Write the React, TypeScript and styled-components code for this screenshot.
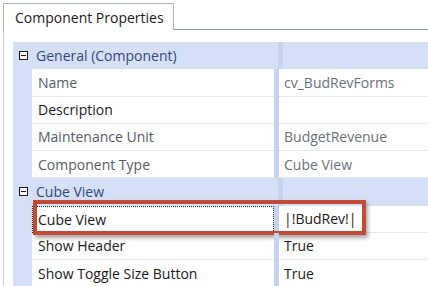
import React from "react";
import styled, { createGlobalStyle, css } from "styled-components";

const GlobalStyle = createGlobalStyle`
    html, body {
        margin: 0;
        padding: 0;
        background: #ffffff;
        overflow: hidden;
    }
`;

const Page = styled.div`
    width: 428px;
    height: 286px;
    font-family: "Open Sans", "Noto Sans", sans-serif;
    font-size: 14px;
    color: #1e1e1e;
    padding-top: 3px;
    box-sizing: border-box;
    overflow: hidden;
`;

const TabStrip = styled.div`
    display: flex;
    align-items: flex-end;
    height: 27px;
    padding-left: 3px;
`;

const Tab = styled.div`
    width: 171px;
    height: 27px;
    box-sizing: border-box;
    border: 1px solid #aab3c6;
    border-bottom: none;
    padding-left: 11px;
    display: flex;
    align-items: center;
    color: #1a1a1a;
`;

const TabLine = styled.div`
    flex: 1;
    border-bottom: 1px solid #8e9ab2;
`;

const Panel = styled.div`
    margin-left: 3px;
    border-left: 1px solid #c8d0de;
    padding: 12px 0 0 9px;
    height: 260px;
`;

const Grid = styled.div`
    display: flex;
    flex-direction: column;
`;

const Row = styled.div<{ category?: boolean }>`
    position: relative;
    display: flex;
    height: 27.25px;
    ${({ category }) =>
        category &&
        css`
            background: #d5e0f6;
        `}
`;

const Gutter = styled.div`
    width: 19px;
    flex: none;
    background: #d5e0f6;
    display: flex;
    align-items: center;
    justify-content: center;
`;

const Toggle = styled.span`
    width: 7px;
    height: 7px;
    border: 1px solid #1a1a1a;
    background: #ffffff;
    position: relative;
    margin-left: 2px;

    &::after {
        content: "";
        position: absolute;
        left: 1px;
        right: 1px;
        top: 3px;
        height: 1px;
        background: #1a1a1a;
    }
`;

const CategoryLabel = styled.div`
    width: 242px;
    flex: none;
    padding-left: 4px;
    display: flex;
    align-items: center;
    color: #34477a;
`;

const NameCell = styled.div<{ muted?: boolean; focused?: boolean }>`
    width: 242px;
    flex: none;
    box-sizing: border-box;
    padding-left: 6px;
    display: flex;
    align-items: center;
    border-bottom: 1px solid #e2e8f5;
    white-space: nowrap;
    color: ${({ muted }) => (muted ? "#555b66" : "#1a1a1a")};
    ${({ focused }) =>
        focused &&
        css`
            border: 1px dotted #222;
            padding-left: 5px;
        `}
`;

const Splitter = styled.div`
    width: 5px;
    flex: none;
    background: #c6d3ee;
`;

const ValueCell = styled.div<{ muted?: boolean }>`
    flex: 1;
    box-sizing: border-box;
    padding-left: 5px;
    display: flex;
    align-items: center;
    border-bottom: 1px solid #e2e8f5;
    white-space: nowrap;
    color: ${({ muted }) => (muted ? "#6b717c" : "#1a1a1a")};
`;

const Highlight = styled.div`
    position: absolute;
    left: 20px;
    top: -6px;
    width: 333px;
    height: 35px;
    box-sizing: border-box;
    border: 4px solid #c24a36;
    box-shadow: 2px 3px 4px rgba(0, 0, 0, 0.35);
    pointer-events: none;
`;

type Prop = { name: string; value: string; muted?: boolean; valueMuted?: boolean; focused?: boolean };

const general: Prop[] = [
    { name: "Name", value: "cv_BudRevForms", muted: true, valueMuted: true },
    { name: "Description", value: "" },
    { name: "Maintenance Unit", value: "BudgetRevenue", muted: true, valueMuted: true },
    { name: "Component Type", value: "Cube View", muted: true, valueMuted: true },
];

const cubeView: Prop[] = [
    { name: "Cube View", value: "|!BudRev!|", focused: true },
    { name: "Show Header", value: "True" },
    { name: "Show Toggle Size Button", value: "True" },
];

const Category: React.FC<{ title: string }> = ({ title }) => (
    <Row category>
        <Gutter>
            <Toggle />
        </Gutter>
        <CategoryLabel>{title}</CategoryLabel>
        <Splitter />
    </Row>
);

const PropRow: React.FC<{ prop: Prop }> = ({ prop }) => (
    <Row>
        <Gutter />
        <NameCell muted={prop.muted} focused={prop.focused}>
            {prop.name}
        </NameCell>
        <Splitter />
        <ValueCell muted={prop.valueMuted}>{prop.value}</ValueCell>
        {prop.focused && <Highlight />}
    </Row>
);

const App: React.FC = () => {
    return (
        <Page>
            <GlobalStyle />
            <TabStrip>
                <Tab>Component Properties</Tab>
                <TabLine />
            </TabStrip>
            <Panel>
                <Grid>
                    <Category title="General (Component)" />
                    {general.map((p) => (
                        <PropRow key={p.name} prop={p} />
                    ))}
                    <Category title="Cube View" />
                    {cubeView.map((p) => (
                        <PropRow key={p.name} prop={p} />
                    ))}
                </Grid>
            </Panel>
        </Page>
    );
};

export default App;
